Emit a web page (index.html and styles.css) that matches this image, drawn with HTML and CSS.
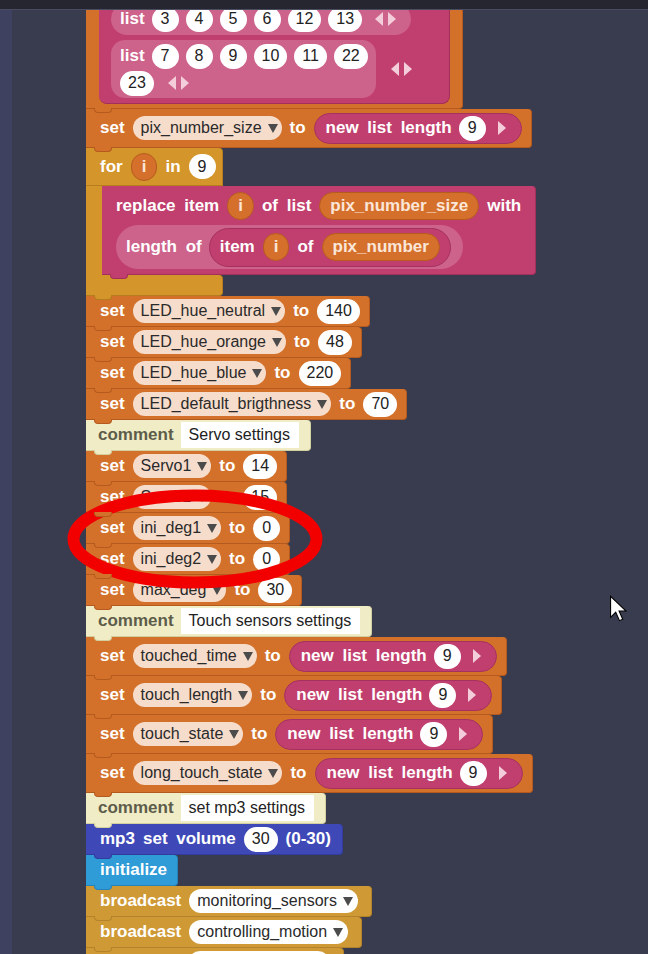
FILE: index.html
```html
<!DOCTYPE html>
<html>
<head>
<meta charset="utf-8">
<title>blocks</title>
<link rel="stylesheet" href="styles.css">
</head>
<body>
<div class="topbar"></div>
<div class="workspace">
  <div class="rail"></div>
  <div class="canvas">
    <div class="stack">

      <!-- tail of the pix_number set block -->
      <div class="block var top">
        <div class="lists">
          <div class="list-row">
            <span class="lbl">list</span>
            <span class="num">3</span><span class="num">4</span><span class="num">5</span><span class="num">6</span><span class="num">12</span><span class="num">13</span>
            <svg class="mut" viewBox="0 0 23 16"><path d="M9 1v14L1 8zM14 1v14l8-7z"/></svg>
          </div>
          <div class="list-wrap">
            <div class="list-box">
              <div class="line">
                <span class="lbl">list</span>
                <span class="num">7</span><span class="num">8</span><span class="num">9</span><span class="num">10</span><span class="num">11</span><span class="num">22</span>
              </div>
              <div class="line">
                <span class="num">23</span>
                <svg class="mut" viewBox="0 0 23 16"><path d="M9 1v14L1 8zM14 1v14l8-7z"/></svg>
              </div>
            </div>
            <svg class="mut" viewBox="0 0 23 16"><path d="M9 1v14L1 8zM14 1v14l8-7z"/></svg>
          </div>
        </div>
      </div>

      <div class="block var tall">
        <span class="lbl">set</span><span class="dd">pix_number_size</span><span class="lbl">to</span>
        <span class="rep"><span class="lbl">new list length</span><span class="num">9</span><svg class="tri" viewBox="0 0 10 16"><path d="M1 1v14l8-7z"/></svg></span>
      </div>

      <div class="for">
        <div class="block ctrl for-head"><span class="lbl">for</span><span class="getter">i</span><span class="lbl">in</span><span class="num">9</span></div>
        <div class="for-body">
          <div class="arm"></div>
          <div class="block list replace">
            <div class="rrow">
              <span class="lbl">replace item</span><span class="getter">i</span><span class="lbl">of list</span><span class="getter">pix_number_size</span><span class="lbl">with</span>
            </div>
            <div class="len-box">
              <span class="lbl">length of</span>
              <div class="item-rep"><span class="lbl">item</span><span class="getter">i</span><span class="lbl">of</span><span class="getter">pix_number</span></div>
            </div>
          </div>
        </div>
        <div class="block ctrl for-foot"></div>
      </div>

      <div class="block var"><span class="lbl">set</span><span class="dd">LED_hue_neutral</span><span class="lbl">to</span><span class="num">140</span></div>
      <div class="block var"><span class="lbl">set</span><span class="dd">LED_hue_orange</span><span class="lbl">to</span><span class="num">48</span></div>
      <div class="block var"><span class="lbl">set</span><span class="dd">LED_hue_blue</span><span class="lbl">to</span><span class="num">220</span></div>
      <div class="block var"><span class="lbl">set</span><span class="dd">LED_default_brigthness</span><span class="lbl">to</span><span class="num">70</span></div>

      <div class="block cmt"><span class="lbl">comment</span><span class="field">Servo settings</span></div>
      <div class="block var"><span class="lbl">set</span><span class="dd">Servo1</span><span class="lbl">to</span><span class="num">14</span></div>
      <div class="block var"><span class="lbl">set</span><span class="dd">Servo2</span><span class="lbl">to</span><span class="num">15</span></div>
      <div class="block var"><span class="lbl">set</span><span class="dd">ini_deg1</span><span class="lbl">to</span><span class="num">0</span></div>
      <div class="block var"><span class="lbl">set</span><span class="dd">ini_deg2</span><span class="lbl">to</span><span class="num">0</span></div>
      <div class="block var"><span class="lbl">set</span><span class="dd">max_deg</span><span class="lbl">to</span><span class="num">30</span></div>

      <div class="block cmt"><span class="lbl">comment</span><span class="field">Touch sensors settings</span></div>
      <div class="block var tall">
        <span class="lbl">set</span><span class="dd">touched_time</span><span class="lbl">to</span>
        <span class="rep"><span class="lbl">new list length</span><span class="num">9</span><svg class="tri" viewBox="0 0 10 16"><path d="M1 1v14l8-7z"/></svg></span>
      </div>
      <div class="block var tall">
        <span class="lbl">set</span><span class="dd">touch_length</span><span class="lbl">to</span>
        <span class="rep"><span class="lbl">new list length</span><span class="num">9</span><svg class="tri" viewBox="0 0 10 16"><path d="M1 1v14l8-7z"/></svg></span>
      </div>
      <div class="block var tall">
        <span class="lbl">set</span><span class="dd">touch_state</span><span class="lbl">to</span>
        <span class="rep"><span class="lbl">new list length</span><span class="num">9</span><svg class="tri" viewBox="0 0 10 16"><path d="M1 1v14l8-7z"/></svg></span>
      </div>
      <div class="block var tall">
        <span class="lbl">set</span><span class="dd">long_touch_state</span><span class="lbl">to</span>
        <span class="rep"><span class="lbl">new list length</span><span class="num">9</span><svg class="tri" viewBox="0 0 10 16"><path d="M1 1v14l8-7z"/></svg></span>
      </div>

      <div class="block cmt"><span class="lbl">comment</span><span class="field">set mp3 settings</span></div>
      <div class="block sound"><span class="lbl">mp3</span><span class="lbl">set volume</span><span class="num">30</span><span class="lbl">(0-30)</span></div>
      <div class="block init"><span class="lbl">initialize</span></div>
      <div class="block event"><span class="lbl">broadcast</span><span class="dd white">monitoring_sensors</span></div>
      <div class="block event"><span class="lbl">broadcast</span><span class="dd white">controlling_motion</span></div>
      <!-- next block, only its top edge is in view -->
      <div class="block event peek"><span class="dd white"></span></div>
    </div>
  </div>

  <svg class="mark" viewBox="0 0 256 100"><ellipse cx="128" cy="50" rx="121.5" ry="43.5"/></svg>
  <svg class="cursor" viewBox="0 0 13 20"><path d="M1 1V16.5L4.8 12.8L7.6 19L10 18L7.3 11.8H12.3Z"/></svg>
</div>
</body>
</html>
```

FILE: styles.css
```css
* {margin:0; padding:0; box-sizing:border-box;}
body {background:#393c4e; font-family:"Liberation Sans", Arial, sans-serif; overflow:hidden;}

.topbar {height:10px; background:#25262f; border-bottom:1px solid #4a4d62;}
.workspace {position:relative; display:flex; height:944px;}
.rail {width:12px; background:#3f4161;}
.canvas {flex:1; overflow:hidden;}
.stack {display:flex; flex-direction:column; align-items:flex-start; padding-left:74px;}

/* blocks */
.block {position:relative; display:flex; align-items:center; gap:8px; min-height:31px; padding:0 9px 0 14px; border-style:solid; border-width:0 1px 1px 0; border-radius:0 4px 4px 0;}
.block::after {content:""; position:absolute; left:8px; top:100%; width:16px; height:4px; background:inherit; border:1px solid; border-color:inherit; border-top:0; border-radius:0 0 4px 4px; z-index:2;}
.block.tall {min-height:39px;}

.var {background:#d3712b; border-color:#b55a1e;}
.ctrl {background:#d4952b; border-color:#b67c1e;}
.list {background:#c13f6e; border-color:#a32f5b;}
.cmt {background:#efecc6; border-color:#d3cf9f; padding:0 11px 0 12px; gap:7px;}
.sound {background:#3e49b7; border-color:#323c9c; padding-right:11px;}
.init {background:#2f9bd7; border-color:#2684bb; padding-right:10px;}
.event {background:#cf9a35; border-color:#b3822a; padding-right:13px;}
.peek {padding-left:102px;}
.peek .dd {width:142px;}
.peek .dd::after {display:none;}

.lbl {color:#fff; font-weight:bold; font-size:17px; word-spacing:4px; white-space:nowrap;}
.cmt .lbl {color:#5d5c4b;}
.field {display:flex; align-items:center; height:26px; padding:0 9px 0 8px; background:#fff; color:#222; font-size:16px; white-space:nowrap;}

/* inputs */
.dd {display:flex; align-items:center; gap:6px; height:24px; padding:0 4px 0 8px; border-radius:12px; background:#f6dccb; color:#2a2a2a; font-size:16px; white-space:nowrap;}
.dd::after {content:""; border-left:5px solid transparent; border-right:5px solid transparent; border-top:9px solid #4b4b4b;}
.dd.white {background:#fff; padding-right:5px;}
.num {display:flex; align-items:center; justify-content:center; min-width:27px; height:25px; padding:0 8px; border-radius:13px; background:#fff; color:#222; font-size:16px;}
.getter {display:flex; align-items:center; height:28px; padding:0 10px; border-radius:14px; background:#d5702c; border:1px solid #b65b1f; color:#fbe6d8; font-weight:bold; font-size:17px; white-space:nowrap;}
.rep {display:flex; align-items:center; gap:7px; height:31px; padding:0 14px 0 11px; border-radius:16px; background:#c13f6e; border:1px solid #a53160;}
.tri {width:10px; height:16px; margin-left:4px; fill:#f3cdda;}
.mut {width:23px; height:16px; fill:#f3cdda;}

/* top list block */
.top {margin-top:-10px; align-items:flex-start; padding:0 12px 4px 13px;}
.lists {display:flex; flex-direction:column; gap:5px; padding:3px 36px 5px 12px; background:#c13f6e; border:1px solid #a32f5b; border-top:0; border-left:0; border-radius:0 0 8px 8px;}
.list-row {display:flex; align-items:center; gap:7px; align-self:flex-start; height:32px; padding:0 14px 0 9px; border-radius:16px; background:#cd628b;}
.list-row .mut {margin-left:5px;}
.list-wrap {display:flex; align-items:center; gap:14px;}
.list-box {display:flex; flex-direction:column; gap:3px; padding:4px 8px 3px 9px; border-radius:14px; background:#cd628b;}
.line {display:flex; align-items:center; gap:7px; height:24px;}
.line .mut {margin-left:6px;}

/* for loop */
.for {display:flex; flex-direction:column; align-items:flex-start;}
.for-head {width:137px; min-height:38px; border-radius:0 4px 0 0;}
.for-head::after {display:none;}
.for-body {display:flex;}
.arm {width:16px; background:#d4952b;}
.for-foot {width:137px; min-height:21px;}
.replace {flex-direction:column; align-items:flex-start; gap:5px; padding:6px 14px 5px 14px;}
.rrow {display:flex; align-items:center; gap:8px;}
.len-box {display:flex; align-items:center; gap:7px; height:44px; padding:0 12px 0 10px; border-radius:22px; background:#cd628b;}
.item-rep {display:flex; align-items:center; gap:8px; height:39px; padding:0 10px; border-radius:20px; background:#c13f6e; border:1px solid #a53160;}

/* overlays */
.mark {position:absolute; left:67px; top:479px; width:256px; height:100px; fill:none; stroke:#f20000; stroke-width:12;}
.cursor {position:absolute; left:609px; top:585px; width:18px; height:27px; fill:#fff; stroke:#000; stroke-width:0.8;}
```
